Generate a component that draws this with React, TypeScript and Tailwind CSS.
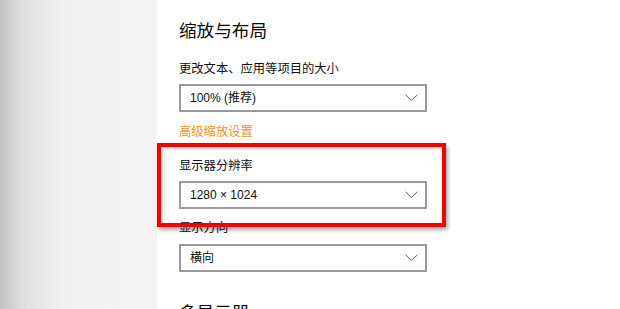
const FONT = "font-['Liberation_Sans','Noto_Sans_CJK_SC',sans-serif]";

function Chevron() {
  return (
    <svg width="13" height="8" viewBox="0 0 13 8" className="text-[#5a5a5a]">
      <path d="M0.6 0.8 L6.5 6.6 L12.4 0.8" fill="none" stroke="currentColor" strokeWidth="1" />
    </svg>
  );
}

function Select({ value }: { value: string }) {
  return (
    <div className="w-[248px] h-[28px] border-2 border-[#9a9a9a] bg-white flex items-center justify-between pl-[9px] pr-[7px]">
      <span className="text-[12px] leading-none text-[#111]">{value}</span>
      <Chevron />
    </div>
  );
}

function Label({ text }: { text: string }) {
  return <p className="h-[18px] text-[12.3px] leading-[18px] text-[#111]">{text}</p>;
}

export default function App() {
  return (
    <div className={`w-[620px] h-[309px] flex overflow-hidden ${FONT}`}>
      {/* Left nav pane */}
      <div className="w-[157px] shrink-0 bg-[linear-gradient(to_right,#c4c4c4_0%,#e4e4e4_18%,#efefef_40%,#f4f4f4_100%)]" />

      {/* Settings content */}
      <div className="relative flex-1 bg-white pl-[22px] pt-[19px]">
        <h2 className="h-[24px] text-[17.6px] leading-[24px] text-[#0a0a0a]">缩放与布局</h2>

        <div className="mt-[17px]">
          <Label text="更改文本、应用等项目的大小" />
        </div>
        <div className="mt-[6px]">
          <Select value="100% (推荐)" />
        </div>

        <p className="mt-[11px] h-[18px] text-[12.3px] leading-[18px] text-[#f5901e]">高级缩放设置</p>

        <div className="mt-[16px]">
          <Label text="显示器分辨率" />
        </div>
        <div className="mt-[6px]">
          <Select value="1280 × 1024" />
        </div>

        <div className="mt-[10px]">
          <Label text="显示方向" />
        </div>
        <div className="mt-[7px]">
          <Select value="横向" />
        </div>

        <h2 className="mt-[29px] h-[24px] text-[17.6px] leading-[24px] text-[#0a0a0a]">多显示器</h2>

        {/* Red annotation box */}
        <div className="absolute left-0 top-[143px] w-[289px] h-[84px] border-4 border-[#f20000] shadow-[2px_3px_4px_rgba(0,0,0,0.35),inset_2px_2px_3px_rgba(0,0,0,0.22)] pointer-events-none" />
      </div>
    </div>
  );
}
